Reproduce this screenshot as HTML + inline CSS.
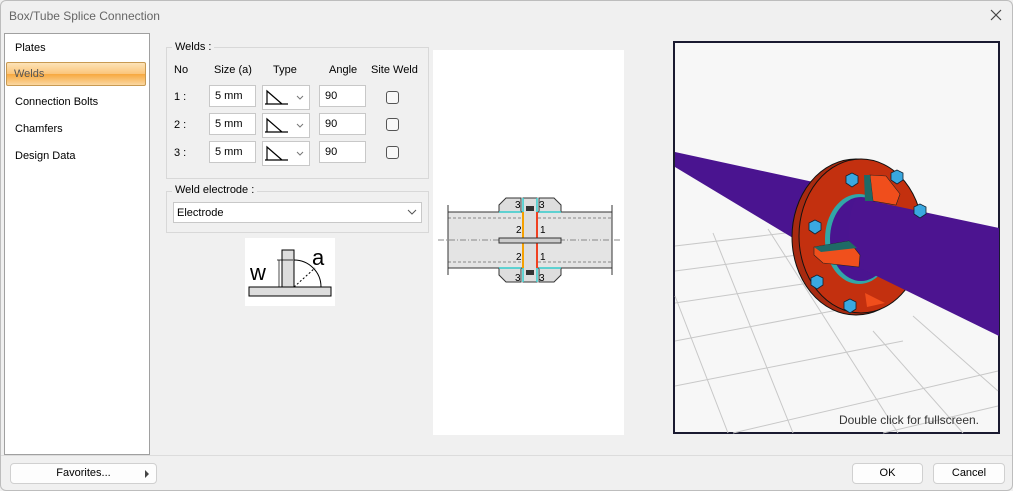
<!DOCTYPE html>
<html><head><style>
*{box-sizing:border-box}
body{margin:0;width:1013px;height:491px;background:#f0f0f0;font-family:"Liberation Sans",sans-serif;font-size:11px;color:#000;position:relative;overflow:hidden}
.abs{position:absolute}
.win{position:absolute;left:0;top:0;width:1013px;height:491px;border:1px solid #bdbdbd;border-radius:6px;background:#f0f0f0}
.title{left:9px;top:9px;font-size:12px;color:#666}
.nav{left:4px;top:33px;width:146px;height:422px;background:#fff;border:1px solid #a0a0a0}
.nav div{position:absolute;left:10px;font-size:11px}
.sel{left:6px;top:62px;width:140px;height:24px;border:1px solid #c89a52;border-radius:2px;background:linear-gradient(#fde3b8,#fbc57a 50%,#f7a93f 51%,#fbd7a0)}
.grp{border:1px solid #d8d8d8}
.lg{background:#f0f0f0;padding:0 3px;font-size:11px}
.inp{background:#fff;border:1px solid #c8c8c8;height:22px;font-size:11px;padding:4px 5px}
.cb{width:13px;height:13px;border:1px solid #555;border-radius:3px;background:#f8f8f8}
.btn{background:#fdfdfd;border:1px solid #d0d0d0;border-radius:4px;height:21px;text-align:center;font-size:11px;line-height:19px}
</style></head><body>
<div class="win"></div>
<div class="abs title">Box/Tube Splice Connection</div>
<svg class="abs" style="left:990px;top:9px" width="12" height="12"><path d="M1 1L11 11M11 1L1 11" stroke="#444" stroke-width="1.2"/></svg>
<div class="abs nav">
<div style="top:8px">Plates</div>
<div style="top:62px">Connection Bolts</div>
<div style="top:89px">Chamfers</div>
<div style="top:116px">Design Data</div>
</div>
<div class="abs sel"></div>
<div class="abs" style="left:14px;top:68px;color:#555">Welds</div>

<div class="abs grp" style="left:166px;top:47px;width:263px;height:132px"></div>
<div class="abs lg" style="left:172px;top:41px">Welds :</div>
<div class="abs" style="left:174px;top:64px">No</div>
<div class="abs" style="left:214px;top:64px">Size (a)</div>
<div class="abs" style="left:273px;top:64px">Type</div>
<div class="abs" style="left:329px;top:64px">Angle</div>
<div class="abs" style="left:371px;top:64px">Site Weld</div>
<div class="abs" style="left:174px;top:91px">1 :</div>
<div class="abs" style="left:174px;top:119px">2 :</div>
<div class="abs" style="left:174px;top:147px">3 :</div>
<div class="abs inp" style="left:209px;top:85px;width:47px">5 mm</div>
<div class="abs inp" style="left:209px;top:113px;width:47px">5 mm</div>
<div class="abs inp" style="left:209px;top:141px;width:47px">5 mm</div>
<div class="abs inp" style="left:319px;top:85px;width:47px">90</div>
<div class="abs inp" style="left:319px;top:113px;width:47px">90</div>
<div class="abs inp" style="left:319px;top:141px;width:47px">90</div>
<svg class="abs" style="left:262px;top:85px" width="48" height="82">
<g id="t"><rect x="0.5" y="0.5" width="47" height="24" fill="#fff" stroke="#c8c8c8"/><path d="M3 19H26M5 19V6L20 19" stroke="#000" fill="none" stroke-width="1.2"/><path d="M35 11l3 3 3-3" stroke="#777" fill="none"/></g>
<use href="#t" y="28"/><use href="#t" y="56"/>
</svg>
<div class="abs cb" style="left:386px;top:91px"></div>
<div class="abs cb" style="left:386px;top:118px"></div>
<div class="abs cb" style="left:386px;top:146px"></div>

<div class="abs grp" style="left:166px;top:191px;width:263px;height:42px"></div>
<div class="abs lg" style="left:172px;top:184px">Weld electrode :</div>
<div class="abs inp" style="left:173px;top:202px;width:249px;height:21px;padding:4px 3px">Electrode</div>
<svg class="abs" style="left:407px;top:209px" width="10" height="6"><path d="M1 1l4 4 4-4" stroke="#555" fill="none"/></svg>

<svg class="abs" style="left:245px;top:238px" width="90" height="68">
<rect width="90" height="68" fill="#fff"/>
<rect x="4" y="49" width="82" height="9" fill="#ddd" stroke="#000"/>
<rect x="37" y="12" width="12" height="37" fill="#ddd" stroke="#000"/>
<path d="M49 22A27 27 0 0 1 76 49" stroke="#000" fill="none"/>
<path d="M49 49L70 30" stroke="#000" stroke-dasharray="2 2"/>
<path d="M32 22H48M32 49H48M34 22V49" stroke="#000" stroke-width=".7"/>
<text x="5" y="42" font-size="22" font-family="Liberation Sans">w</text>
<text x="67" y="27" font-size="22" font-family="Liberation Sans">a</text>
</svg>

<div class="abs" style="left:433px;top:50px;width:191px;height:385px;background:#fff"></div>
<svg class="abs" style="left:430px;top:185px" width="200" height="110" font-family="Liberation Sans" font-size="10">
<rect x="18" y="27" width="164" height="56" fill="#e4e4e4"/>
<path d="M18 27H182M18 83H182" stroke="#333"/>
<path d="M18 33H182M18 77H182" stroke="#888" stroke-dasharray="3 2"/>
<path d="M18 20V90M182 20V90" stroke="#333"/>
<path d="M8 55H192" stroke="#888" stroke-dasharray="6 2 1 2"/>
<path d="M69 27V20L76 13H91V27ZM131 27V20L124 13H109V27ZM69 83V90L76 97H91V83ZM131 83V90L124 97H109V83Z" fill="#ddd" stroke="#333"/>
<path d="M69 27H91M109 27H131M69 83H91M109 83H131" stroke="#3cc" stroke-width="1.5"/>
<rect x="93" y="13" width="14" height="84" fill="#ddd" stroke="#333"/>
<path d="M93 13V97M107 13V97" stroke="#3cc" stroke-width="1.5"/>
<path d="M93 27V83" stroke="#f5a000" stroke-width="2"/><path d="M107 27V83" stroke="#f04020" stroke-width="2"/>
<rect x="96" y="21" width="8" height="5" fill="#333"/><rect x="96" y="85" width="8" height="5" fill="#333"/>
<rect x="69" y="53" width="62" height="5" fill="#ccc" stroke="#333"/>
<text x="85" y="23">3</text><text x="109" y="23">3</text><text x="85" y="96">3</text><text x="109" y="96">3</text>
<text x="86" y="48">2</text><text x="110" y="48">1</text><text x="86" y="75">2</text><text x="110" y="75">1</text>
</svg>

<svg class="abs" style="left:673px;top:41px" width="327" height="393">
<rect x="1" y="1" width="325" height="391" fill="#f7f7f7" stroke="#1a1a30" stroke-width="2"/>
<g stroke="#c8c8c8" stroke-width="1" fill="none">
<path d="M2 205L130 190M2 230L140 212M2 262L150 240M2 300L170 268M2 345L230 300M60 392L325 330M210 392L325 365"/>
<path d="M40 192L120 392M95 188L225 392M2 255L55 392M200 290L290 392M240 275L325 350"/>
</g>
<path d="M2 111L145 142L125 200L2 126Z" fill="#4a1490"/>
<ellipse cx="183" cy="196" rx="64" ry="78" fill="#a82a10" stroke="#111"/>
<ellipse cx="188" cy="195" rx="62" ry="77" fill="#c3300f" stroke="#111"/>
<ellipse cx="186" cy="198" rx="34" ry="45" fill="#32a7a7"/>
<ellipse cx="188" cy="198" rx="31" ry="42" fill="#4a1490"/>
<path d="M185 157L326 187L326 295L185 226Z" fill="#4c1490"/>
<ellipse cx="186" cy="192" rx="10" ry="35" fill="#4c1490"/>
<!-- gussets -->
<path d="M197 134L213 135L227 153L223 164L200 160Z" fill="#f04e1c" stroke="#222" stroke-width=".6"/>
<path d="M191 134L197 134L200 160L192 160Z" fill="#1f6a66"/>
<path d="M141 206L176 200L187 214L186 226L150 222L141 214Z" fill="#f0501c" stroke="#222" stroke-width=".6"/>
<path d="M141 206L176 200L184 207L148 211Z" fill="#1f6a66"/>
<path d="M192 252L194 266L212 262Z" fill="#f04e1c"/>
<g fill="#3aa8e0" stroke="#123" stroke-width=".8">
<polygon points="179,132 185,135 185,142 179,146 173,142 173,135"/>
<polygon points="224,129 230,132 230,139 224,143 218,139 218,132"/>
<polygon points="142,179 148,182 148,189 142,193 136,189 136,182"/>
<polygon points="144,234 150,237 150,244 144,248 138,244 138,237"/>
<polygon points="177,258 183,261 183,268 177,272 171,268 171,261"/>
<polygon points="247,163 253,166 253,173 247,177 241,173 241,166"/>
</g>
<text x="306" y="383" text-anchor="end" font-size="12" font-family="Liberation Sans" fill="#333">Double click for fullscreen.</text>
</svg>

<div class="abs" style="left:1px;top:455px;width:1011px;height:1px;background:#dcdcdc"></div>
<div class="abs btn" style="left:10px;top:463px;width:147px">Favorites...</div>
<svg class="abs" style="left:144px;top:470px" width="6" height="8"><path d="M1 0L5 4L1 8Z" fill="#444"/></svg>
<div class="abs btn" style="left:852px;top:463px;width:71px">OK</div>
<div class="abs btn" style="left:933px;top:463px;width:72px">Cancel</div>
</body></html>
